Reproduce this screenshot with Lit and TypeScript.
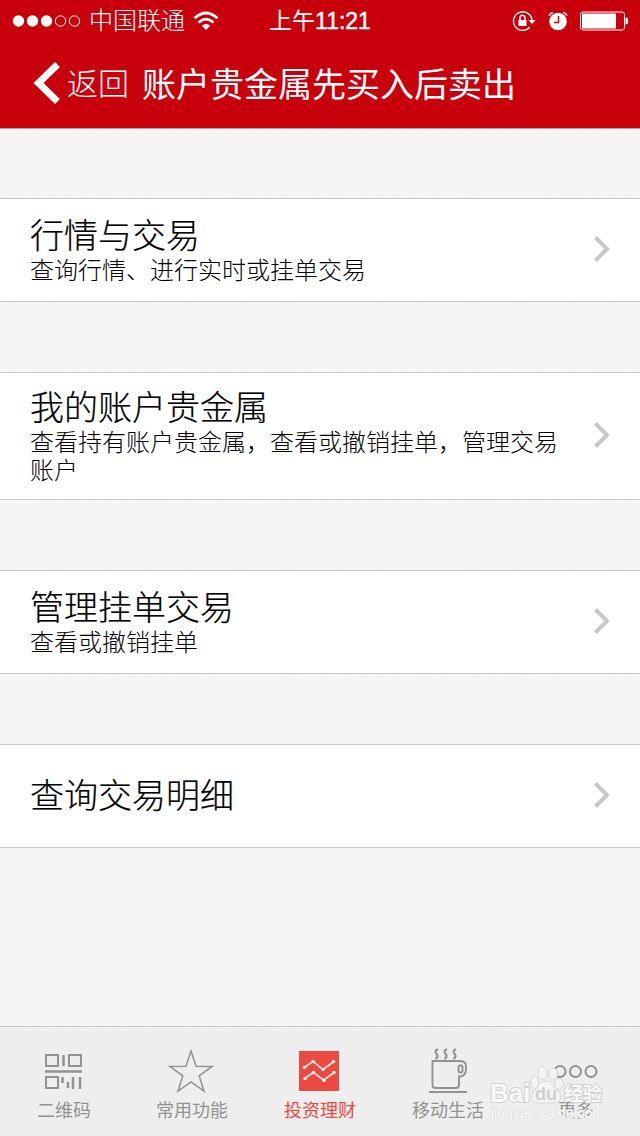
import { LitElement, html, css, svg } from "lit";
import { customElement } from "lit/decorators.js";

interface Entry {
  title: string;
  detail?: string;
}

interface Tab {
  label: string;
  icon: unknown;
  active?: boolean;
}

const ENTRIES: Entry[] = [
  { title: "行情与交易", detail: "查询行情、进行实时或挂单交易" },
  { title: "我的账户贵金属", detail: "查看持有账户贵金属，查看或撤销挂单，管理交易账户" },
  { title: "管理挂单交易", detail: "查看或撤销挂单" },
  { title: "查询交易明细" },
];

const TABS: Tab[] = [
  {
    label: "二维码",
    icon: svg`<g fill="none" stroke="currentColor" stroke-width="2">
      <path d="M6 8h12v11H6zM29 8h12v11H29zM6 30h12v11H6z"/>
      <path stroke-width="2.500" d="M23.500 8v11M5 24.500h37M22.500 30v6M28 35v6M33 30v12M40 30v12"/></g>`,
  },
  {
    label: "常用功能",
    icon: svg`<path fill="none" stroke="currentColor" stroke-width="1.500" d="M24 4l5.100 15.200 16 .2-12.900 9.500 4.800 15.300L24 35 11 44.200l4.800-15.300L2.900 19.400l16-.2z" transform="translate(-1 0)"/>`,
  },
  {
    label: "投资理财",
    active: true,
    icon: svg`<path fill="#ec4a41" d="M3 4h40v40H3z"/>
      <g fill="none" stroke="#f6eeee" stroke-width="1.600"><path d="M8 20.500l9-6 10 8 11-8M8.500 31.500l9-6 10 7.500 11-7.500"/></g>
      <g fill="#f6eeee"><circle cx="8.500" cy="20.500" r="1.800"/><circle cx="17" cy="14.500" r="1.800"/><circle cx="27" cy="22.500" r="1.800"/><circle cx="37.500" cy="14.500" r="1.800"/><circle cx="9" cy="31.500" r="1.800"/><circle cx="17.500" cy="25.500" r="1.800"/><circle cx="28" cy="33.500" r="1.800"/><circle cx="38" cy="25.500" r="1.800"/></g>`,
  },
  {
    label: "移动生活",
    icon: svg`<g fill="none" stroke="currentColor" stroke-width="1.900">
      <path d="M8.500 14h27q6.500 0 6.500 5v3q0 7.500-7 7.500v8.500q0 3-3 3H11.500q-3 0-3-3z"/>
      <rect x="34.500" y="18.500" width="4" height="7" rx="1.800"/>
      <path stroke-width="2.200" d="M5 45h38M14 2.200q-4 1.500-1.500 4.500t-1 5.300M23 2.200q-4 1.500-1.500 4.500t-1 5.300M32 2.200q-4 1.500-1.500 4.500t-1 5.300"/></g>`,
  },
  {
    label: "更多",
    icon: svg`<g fill="none" stroke="currentColor" stroke-width="2"><circle cx="8" cy="24.500" r="5.500"/><circle cx="23.500" cy="24.500" r="5.500"/><circle cx="39" cy="24.500" r="5.500"/></g>`,
  },
];

@customElement("app-root")
export class AppRoot extends LitElement {
  static styles = css`
    :host {
      display: flex;
      flex-direction: column;
      min-height: 100vh;
      position: relative;
      font-family: "Liberation Sans", "Noto Sans CJK SC", sans-serif;
      font-weight: 300;
      color: #000;
      background: repeating-linear-gradient(135deg, #f3f3f3 0 2px, #f7f7f7 2px 4px);
    }
    * {
      box-sizing: border-box;
    }
    svg {
      display: block;
      flex: none;
    }
    header {
      height: 128px;
      background: #c8000b;
      color: #fff;
    }
    .status {
      height: 42px;
      display: grid;
      grid-template-columns: 1fr auto 1fr;
      align-items: center;
      padding: 0 12px;
      font-size: 24px;
      line-height: 42px;
    }
    .carrier {
      display: flex;
      align-items: center;
      gap: 8px;
    }
    .time {
      font-size: 23px;
      font-weight: 400;
    }
    .clock {
      -webkit-text-stroke: 0.5px #fff;
    }
    .indicators {
      display: flex;
      align-items: center;
      justify-content: flex-end;
      gap: 12px;
    }
    .titlebar {
      height: 86px;
      display: flex;
      align-items: center;
      padding: 0 32px;
      gap: 13px;
    }
    button {
      display: flex;
      align-items: center;
      border: 0;
      margin: 0;
      padding: 0;
      background: none;
      font: inherit;
      color: inherit;
      cursor: pointer;
    }
    .back {
      gap: 5px;
      font-size: 31px;
      line-height: 44px;
    }
    h1 {
      margin: 0;
      font-size: 34px;
      line-height: 44px;
      font-weight: 400;
    }
    main {
      flex: 1;
      padding: 70px 0;
      box-shadow: inset 0 1px #a9a9a9;
    }
    ul {
      list-style: none;
      margin: 0;
      padding: 0;
      display: flex;
      flex-direction: column;
      gap: 70px;
    }
    .row {
      display: flex;
      align-items: center;
      gap: 20px;
      min-height: 104px;
      padding: 14px 30px;
      background: #fff;
      border: solid #c8c7cc;
      border-width: 1px 0;
      color: inherit;
      text-decoration: none;
    }
    .text {
      flex: 1;
      display: flex;
      flex-direction: column;
    }
    .title {
      font-size: 34px;
      line-height: 42px;
      -webkit-text-stroke: 0.2px #000;
    }
    .detail {
      font-size: 24px;
      line-height: 28px;
    }
    .tabs {
      display: grid;
      grid-template-columns: repeat(5, 1fr);
      height: 110px;
      background: #eee;
      border-top: 1px solid #c9cac9;
    }
    .tab {
      display: flex;
      flex-direction: column;
      align-items: center;
      padding-top: 20px;
      gap: 2px;
      font-size: 18px;
      line-height: 28px;
      font-weight: 400;
      color: #929292;
      text-decoration: none;
    }
    .tab.active {
      color: #ec4a41;
    }
    .watermark {
      position: absolute;
      right: 32px;
      bottom: 12px;
      pointer-events: none;
      font-family: "Liberation Sans", "Noto Sans CJK SC", sans-serif;
    }
  `;

  render() {
    return html`
      <header>
        <div class="status">
          <div class="carrier">
            <svg width="69" height="14" viewBox="0 0 69 14" aria-hidden="true">
              <g fill="#fff"><circle cx="6.500" cy="7" r="5.700"/><circle cx="20.500" cy="7" r="5.700"/><circle cx="34.500" cy="7" r="5.700"/></g>
              <g fill="none" stroke="#fff"><circle cx="48.500" cy="7" r="5.200"/><circle cx="62.500" cy="7" r="5.200"/></g>
            </svg>
            <span>中国联通</span>
            <svg width="26" height="20" viewBox="0 0 26 20" aria-hidden="true">
              <g fill="none" stroke="#fff" stroke-width="2.700"><path d="M1.500 7.200q11.500-10.400 23 0M5.500 11.500q7.500-6.600 15 0"/></g>
              <path fill="#fff" d="M8.800 14.800q4.200-3.600 8.400 0L13 19z"/>
            </svg>
          </div>
          <div class="time">上午<span class="clock">11:21</span></div>
          <div class="indicators">
            <svg width="24" height="22" viewBox="0 0 24 22" aria-hidden="true">
              <path fill="none" stroke="#fff" stroke-width="1.300" d="M17.700 17.300A9.300 9.300 0 1 1 20 10"/>
              <path fill="#fff" d="M16.300 10h7.400L20 14zM6.500 10h8v6h-8z"/>
              <path fill="none" stroke="#fff" stroke-width="1.500" d="M8 10V8a2.400 2.800 0 0 1 4.900 0v2"/>
            </svg>
            <svg width="20" height="20" viewBox="0 0 20 20" aria-hidden="true">
              <circle cx="10" cy="10.500" r="8.800" fill="#fff"/>
              <path fill="none" stroke="#c8000b" stroke-width="1.500" d="M10.500 5v6.500H6"/>
              <path fill="none" stroke="#fff" stroke-width="1.600" d="M1 4.500Q2 2 5 1.500M19 4.500Q18 2 15 1.500"/>
            </svg>
            <svg width="48" height="20" viewBox="1 0 48 20" aria-hidden="true">
              <rect x="1.500" y="1" width="44" height="18" rx="2.500" fill="none" stroke="#fff"/>
              <path fill="#fff" d="M3 2.500h34v15H3zM46.500 6.500q3 0 3 3.500t-3 3.500z"/>
            </svg>
          </div>
        </div>
        <div class="titlebar">
          <button class="back" type="button">
            <svg width="30" height="46" viewBox="0 0 30 46" aria-hidden="true">
              <path fill="none" stroke="#fff" stroke-width="7" d="M25.500 2.500L6.500 21l19 18.500"/>
            </svg>
            返回
          </button>
          <h1>账户贵金属先买入后卖出</h1>
        </div>
      </header>
      <main>
        <ul>
          ${ENTRIES.map(
            (e) => html`<li>
              <a class="row" href="#">
                <span class="text">
                  <span class="title">${e.title}</span>
                  ${e.detail ? html`<span class="detail">${e.detail}</span>` : null}
                </span>
                <svg width="17" height="28" viewBox="0 0 17 28" aria-hidden="true">
                  <path fill="none" stroke="#c7c7cc" stroke-width="4" d="M2.500 1.500L14 13 2.500 24.500"/>
                </svg>
              </a>
            </li>`
          )}
        </ul>
      </main>
      <nav class="tabs">
        ${TABS.map(
          (t) => html`<a class="tab ${t.active ? "active" : ""}" href="#">
            <svg width="48" height="48" viewBox="0 0 48 48" aria-hidden="true">${t.icon}</svg>
            <span>${t.label}</span>
          </a>`
        )}
      </nav>
      <svg class="watermark" width="120" height="60" viewBox="0 0 120 60">
        <g fill="#f4f4f4" stroke="#d6d6d6" stroke-width="1">
          <ellipse cx="54.500" cy="9" rx="4.500" ry="6.500"/><ellipse cx="65" cy="10" rx="4.500" ry="6"/>
          <ellipse cx="46.500" cy="18" rx="4" ry="6.500"/><ellipse cx="71" cy="20" rx="4.500" ry="5.500"/>
          <path d="M58 17c8 0 8 7 13 11 4 5 1 11-6 11H51c-7 0-9-6-6-11 5-4 5-11 13-11z"/>
        </g>
        <g fill="#f8f8f8" stroke="#d2d2d2" stroke-width="2" font-weight="700" paint-order="stroke">
          <text x="2" y="38" font-size="26">Bai</text>
          <text x="76" y="37" font-size="19">经验</text>
        </g>
        <text x="47" y="36" font-size="18" font-weight="700" fill="#cfcfcf">du</text>
        <text x="3" y="54" font-size="14" fill="#fafafa" stroke="#dadada" paint-order="stroke">jingyan.baidu.com</text>
      </svg>
    `;
  }
}
